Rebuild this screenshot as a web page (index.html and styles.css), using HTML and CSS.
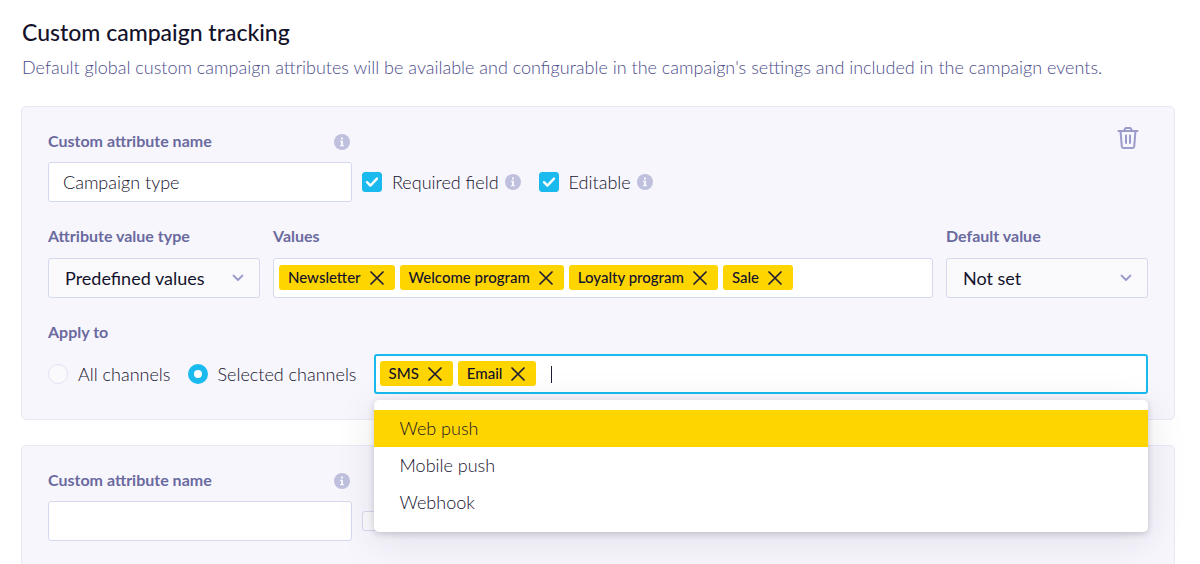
FILE: index.html
```html
<!DOCTYPE html>
<html lang="en">
<head>
    <meta charset="UTF-8">
    <meta name="viewport" content="width=device-width, initial-scale=1.0">
    <title>Custom campaign tracking</title>
    <link rel="stylesheet" href="styles.css">
</head>
<body>
    <!-- Shared icons -->
    <svg class="sprite" aria-hidden="true">
        <symbol id="icon-info" viewBox="0 0 16 16">
            <circle cx="8" cy="8" r="8" fill="#bfbfde"/>
            <path d="M7 3.5h2v2H7zM6 6.7h3v4.3h1v1.3H6V11h1V8H6z" fill="#f7f6fd"/>
        </symbol>
        <symbol id="icon-check" viewBox="0 0 20 20">
            <path d="M5 10.2l3.4 3.4L15 6.6" fill="none" stroke="#fff" stroke-width="2.4" stroke-linecap="round" stroke-linejoin="round"/>
        </symbol>
        <symbol id="icon-close" viewBox="0 0 14 14">
            <path d="M1 1l12 12M13 1L1 13" fill="none" stroke="#1f1d35" stroke-width="1.7" stroke-linecap="round"/>
        </symbol>
        <symbol id="icon-chevron" viewBox="0 0 12 8">
            <path d="M1.5 1.5L6 6l4.500-4.500" fill="none" stroke="#9a9acb" stroke-width="1.8" stroke-linecap="round" stroke-linejoin="round"/>
        </symbol>
    </svg>

    <main class="page">
        <h1>Custom campaign tracking</h1>
        <p class="intro">Default global custom campaign attributes will be available and configurable in the campaign's settings and included in the campaign events.</p>

        <section class="card">
            <div class="row">
                <div class="field field-name">
                    <div class="label-row">
                        <label for="name1">Custom attribute name</label>
                        <svg class="info"><use href="#icon-info"/></svg>
                    </div>
                    <input class="control text-input" type="text" id="name1" value="Campaign type">
                </div>
                <div class="checks">
                    <div class="check">
                        <span class="tick">
                            <input type="checkbox" id="required1" checked>
                            <svg><use href="#icon-check"/></svg>
                        </span>
                        <label for="required1">Required field</label>
                        <svg class="info"><use href="#icon-info"/></svg>
                    </div>
                    <div class="check">
                        <span class="tick">
                            <input type="checkbox" id="editable1" checked>
                            <svg><use href="#icon-check"/></svg>
                        </span>
                        <label for="editable1">Editable</label>
                        <svg class="info"><use href="#icon-info"/></svg>
                    </div>
                </div>
                <button class="delete" type="button" aria-label="Delete">
                    <svg viewBox="0 0 22 24" fill="none" stroke="#9a9acb" stroke-width="2" stroke-linecap="round" stroke-linejoin="round">
                        <path d="M1.500 5h19M3.500 5l1.300 15.500c.1.900.7 1.500 1.600 1.500h9.200c.900 0 1.500-.6 1.600-1.500L18.500 5M7.500 4.500c0-1.500.6-2.500 2-2.500h3c1.400 0 2 1 2 2.500M9 9.500v7.500M13 9.500v7.500"/>
                    </svg>
                </button>
            </div>

            <div class="row">
                <div class="field field-type">
                    <div class="label-row"><label for="type">Attribute value type</label></div>
                    <div class="select">
                        <select class="control" id="type">
                            <option>Predefined values</option>
                        </select>
                        <svg><use href="#icon-chevron"/></svg>
                    </div>
                </div>
                <div class="field field-grow">
                    <div class="label-row"><label for="values">Values</label></div>
                    <div class="control tags">
                        <span class="tag">Newsletter <button type="button" aria-label="Remove"><svg><use href="#icon-close"/></svg></button></span>
                        <span class="tag">Welcome program <button type="button" aria-label="Remove"><svg><use href="#icon-close"/></svg></button></span>
                        <span class="tag">Loyalty program <button type="button" aria-label="Remove"><svg><use href="#icon-close"/></svg></button></span>
                        <span class="tag">Sale <button type="button" aria-label="Remove"><svg><use href="#icon-close"/></svg></button></span>
                        <input type="text" id="values">
                    </div>
                </div>
                <div class="field field-default">
                    <div class="label-row"><label for="default">Default value</label></div>
                    <div class="select">
                        <select class="control" id="default">
                            <option>Not set</option>
                        </select>
                        <svg><use href="#icon-chevron"/></svg>
                    </div>
                </div>
            </div>

            <fieldset class="field">
                <legend class="label-row">Apply to</legend>
                <div class="channels">
                    <label class="radio"><input type="radio" name="channels"> All channels</label>
                    <label class="radio"><input type="radio" name="channels" checked> Selected channels</label>
                    <div class="combo">
                        <div class="control tags focused">
                            <span class="tag">SMS <button type="button" aria-label="Remove"><svg><use href="#icon-close"/></svg></button></span>
                            <span class="tag">Email <button type="button" aria-label="Remove"><svg><use href="#icon-close"/></svg></button></span>
                            <span class="caret"></span>
                            <input type="text" aria-label="Selected channels">
                        </div>
                        <ul class="menu">
                            <li><button class="active" type="button">Web push</button></li>
                            <li><button type="button">Mobile push</button></li>
                            <li><button type="button">Webhook</button></li>
                        </ul>
                    </div>
                </div>
            </fieldset>
        </section>

        <section class="card">
            <div class="row">
                <div class="field field-name">
                    <div class="label-row">
                        <label for="name2">Custom attribute name</label>
                        <svg class="info"><use href="#icon-info"/></svg>
                    </div>
                    <input class="control text-input" type="text" id="name2">
                </div>
                <div class="checks">
                    <span class="tick"><input type="checkbox" aria-label="Required field"></span>
                </div>
            </div>
        </section>
    </main>
</body>
</html>
```

FILE: styles.css
```css
* {
    box-sizing: border-box;
}
body {
    margin: 0;
    background: #fff;
    color: #14122b;
    font-family: Lato, sans-serif;
    font-size: 18px;
    font-weight: 300;
}
input, select, button {
    font: inherit;
    color: inherit;
    margin: 0;
}
button {
    padding: 0;
    border: none;
    background: none;
    cursor: pointer;
}
svg {
    display: block;
}
.sprite {
    display: none;
}
.page {
    padding: 19px 25px 0 21px;
}
h1 {
    margin: 0 1px 10px;
    font-size: 23px;
    font-weight: 500;
    line-height: 26px;
}
.intro {
    margin: 0 1px 27px;
    line-height: 24px;
    color: #4c4c8c;
}
.card {
    display: flex;
    flex-direction: column;
    gap: 24px;
    margin-bottom: 25px;
    padding: 24px 26px 25px;
    border: 1px solid #e9e8f5;
    border-radius: 5px;
    background: #f7f6fd;
}
.card:last-child {
    margin-bottom: 0;
}
.row {
    display: flex;
    gap: 13px;
}
.field {
    min-width: 0;
    margin: 0;
    padding: 0;
    border: none;
}
.field-name {
    width: 304px;
}
.field-type {
    width: 212px;
}
.field-default {
    width: 202px;
}
.field-grow {
    flex: 1;
}
.label-row {
    display: flex;
    align-items: center;
    justify-content: space-between;
    margin-bottom: 12px;
    padding: 0;
    font-size: 16px;
    font-weight: 700;
    line-height: 20px;
    color: #6a6a9f;
}
.field-name .label-row {
    margin-bottom: 11px;
}
.info {
    width: 16px;
    height: 16px;
}
.label-row .info {
    margin: 2px 2px 0 0;
}
.control {
    display: block;
    width: 100%;
    height: 40px;
    border: 1px solid #d5d9ee;
    border-radius: 3px;
    background: #fff;
    outline: none;
}
.text-input {
    padding: 0 14px;
}

/* Checkboxes */
.checks {
    display: flex;
    align-self: flex-end;
    align-items: center;
    gap: 18px;
    height: 40px;
    margin-left: -3px;
}
.check {
    display: flex;
    align-items: center;
}
.check label {
    margin: 0 6px 0 10px;
}
.tick {
    display: grid;
}
.tick > * {
    grid-area: 1 / 1;
    width: 20px;
    height: 20px;
    pointer-events: none;
}
.tick input {
    appearance: none;
    border: 1px solid #d5d9ee;
    border-radius: 3px;
    background: #fafafd;
    pointer-events: auto;
}
.tick input:checked {
    border-color: #1abaee;
    background: #1abaee;
}
.delete {
    align-self: flex-start;
    margin: -5px 9px 0 auto;
}
.delete svg {
    width: 22px;
    height: 24px;
}

/* Selects */
.select {
    display: grid;
    align-items: center;
}
.select > * {
    grid-area: 1 / 1;
}
.select select {
    appearance: none;
    padding: 0 40px 0 16px;
    background: #fafafd;
    font-weight: 400;
}
.select svg {
    justify-self: end;
    width: 12px;
    height: 8px;
    margin-right: 16px;
    pointer-events: none;
}

/* Tag inputs */
.tags {
    display: flex;
    gap: 5px;
    padding: 6px 5px;
}
.tags.focused {
    padding: 5px 4px;
    border: 2px solid #1abaee;
}
.tag {
    display: flex;
    align-items: center;
    gap: 9px;
    height: 25px;
    padding: 0 11px 2px 9px;
    border-radius: 3px;
    background: #ffd500;
    font-size: 15px;
    font-weight: 500;
    white-space: nowrap;
}
.tag button {
    margin-top: 2px;
}
.tag svg {
    width: 14px;
    height: 14px;
}
.tags input {
    flex: 1;
    min-width: 0;
    padding: 0;
    border: none;
    outline: none;
    background: none;
}
.caret {
    width: 1px;
    height: 17px;
    margin: 5px 0 0 10px;
    background: #1f1d35;
}

/* Channels */
.channels {
    display: flex;
    align-items: center;
    gap: 17px;
}
.radio {
    display: flex;
    align-items: center;
    gap: 10px;
    white-space: nowrap;
}
.radio input {
    appearance: none;
    width: 20px;
    height: 20px;
    border: 1px solid #e2e2f2;
    border-radius: 50%;
    background: #fafafd;
}
.radio input:checked {
    border: 6px solid #1abaee;
    background: #fff;
}
.combo {
    position: relative;
    flex: 1;
}
.menu {
    position: absolute;
    z-index: 1;
    top: 100%;
    left: 0;
    right: 0;
    margin: 6px 0 0;
    padding: 10px 0 11px;
    border-radius: 5px;
    background: #fff;
    box-shadow: 0 2px 6px rgba(31, 29, 53, 0.2), 0 8px 40px rgba(31, 29, 53, 0.1);
    list-style: none;
}
.menu button {
    display: block;
    width: 100%;
    padding: 0 26px;
    line-height: 37px;
    text-align: left;
}
.menu .active {
    background: #ffd500;
}
```
